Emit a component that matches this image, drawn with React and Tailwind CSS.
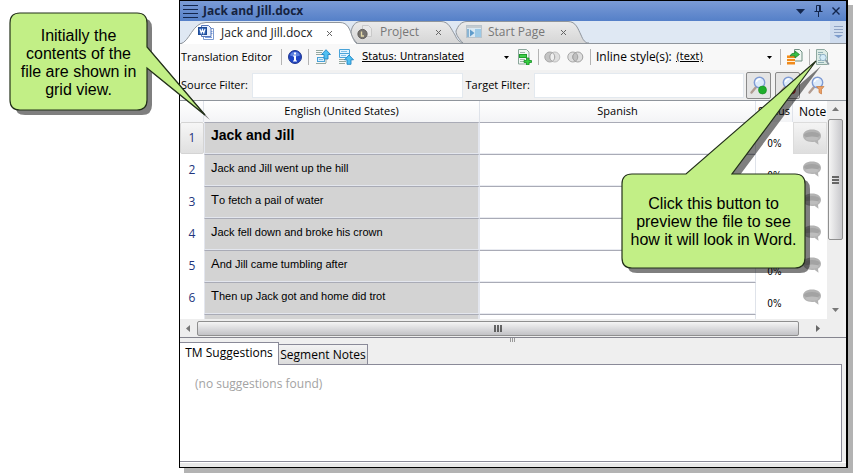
import React from "react";

const segments = [
  { id: 1, source: "Jack and Jill", status: "0%", heading: true },
  { id: 2, source: "Jack and Jill went up the hill", status: "0%" },
  { id: 3, source: "To fetch a pail of water" },
  { id: 4, source: "Jack fell down and broke his crown" },
  { id: 5, source: "And Jill came tumbling after", status: "0%" },
  { id: 6, source: "Then up Jack got and home did trot", status: "0%" },
];

const uiFont = "font-['Open_Sans','Noto_Sans',sans-serif]";
const smallFont = "font-['DejaVu_Sans_Condensed','DejaVu_Sans',sans-serif]";

function WordIcon() {
  return (
    <svg width="17" height="16" viewBox="0 0 17 16">
      <path d="M5.500 3.500h10v11h-10z" fill="#fff" stroke="#7d9bcf" />
      <path d="M12 6.500h2.500M12 8.500h2.500M7 12.500h7" stroke="#7b9fe0" />
      <path d="M3.500.500h7l2.500 2.500v8.500h-9.500z" fill="#eaf2ff" stroke="#5878b8" />
      <rect x=".5" y="2.500" width="8" height="7" fill="#2f62b5" stroke="#1f4a94" />
      <path d="M2 4l1.200 4 1.300-3.500 1.300 3.500 1.200-4" fill="none" stroke="#fff" strokeWidth="1.100" />
    </svg>
  );
}

function ProjectIcon() {
  return (
    <svg width="17" height="16" viewBox="0 0 17 16">
      <path d="M5.500 1.500h6l3 3v8h-9z" fill="#e9e9e9" stroke="#c9c9c9" />
      <circle cx="5.500" cy="10" r="4.600" fill="#777470" stroke="#5f5c58" />
      <path d="M4.500 7.500v4.500h2.500" fill="none" stroke="#e3d9a8" strokeWidth="1.400" />
    </svg>
  );
}

function StartIcon() {
  return (
    <svg width="16" height="14" viewBox="0 0 16 14">
      <rect x=".5" y=".5" width="15" height="12" fill="#d9e8f2" stroke="#b9c4cc" />
      <rect x="1" y="1" width="14" height="2" fill="#c4cbd0" />
      <path d="M2 4v8" stroke="#6fa3c9" strokeWidth="1.500" />
      <path d="M4 4.500l4.500 3.500L4 11.500z" fill="#5f9ccb" />
      <rect x="9" y="4" width="6" height="8" fill="#9cc9e6" />
    </svg>
  );
}

function Caret() {
  return (
    <svg width="5" height="3" viewBox="0 0 5 3">
      <path d="M0 0h5L2.500 3z" fill="#000" />
    </svg>
  );
}

function InfoIcon() {
  return (
    <svg width="14" height="14" viewBox="0 0 14 14">
      <circle cx="7" cy="7" r="6.500" fill="#1f45c4" stroke="#24398f" />
      <path d="M2 5.500a5.200 5.200 0 0 1 10 0q-5 2-10 0z" fill="#5f83e0" />
      <path d="M6 2.500h2v2h-2zM5 5.500h3v5h1v1h-4v-1h1v-4h-1z" fill="#fff" />
    </svg>
  );
}

function PageUpIcon() {
  return (
    <svg width="16" height="16" viewBox="0 0 16 16">
      <path d="M1 1.500h7M1 3.500h6M1 5.500h8M1 14.500h10" stroke="#94a8a0" />
      <rect x="2.500" y="8.500" width="7" height="4" fill="#d9f0fd" stroke="#49a3d8" />
      <path d="M4 10.500h4" stroke="#7fc0e8" />
      <path d="M11 .7l4.500 4.800h-2.500v4.500h-4v-4.500h-2.500z" fill="#4fc0f2" stroke="#2387c4" strokeWidth=".9" />
      <path d="M11 10v4" stroke="#94a8a0" />
    </svg>
  );
}

function RowsUpIcon() {
  return (
    <svg width="16" height="16" viewBox="0 0 16 16">
      <path d="M1.500.500h10v4h-10zM1.500 4.500h10v4h-10z" fill="#e2f4ff" stroke="#49a3d8" />
      <path d="M3 2.500h6M3 6.500h5" stroke="#7fc0e8" />
      <path d="M1 10.500h6M1 12.500h7M1 14.500h6" stroke="#94a8a0" />
      <path d="M11 6l4.500 4.800h-2.500v4.500h-4v-4.500h-2.500z" fill="#4fc0f2" stroke="#2387c4" strokeWidth=".9" />
    </svg>
  );
}

function AddSegmentIcon() {
  return (
    <svg width="15" height="16" viewBox="0 0 15 16">
      <path d="M1.500.5h8l2.500 2.500v12h-10.500z" fill="#f1f8f4" stroke="#8ba69b" />
      <path d="M3 3.500h5M3 10.500h5M3 12.500h4" stroke="#9fb5ab" />
      <rect x="2.500" y="5.500" width="7" height="3" fill="#3fd04a" stroke="#1d9d2b" />
      <path d="M9.500 9h2.500v2.500h2.500v2h-2.500v2.500h-2.500v-2.500h-2.500v-2h2.500z" fill="#33cf3f" stroke="#168d24" strokeWidth=".8" />
    </svg>
  );
}

function RingsIcon({ joined }) {
  return (
    <svg width="17" height="12" viewBox="0 0 17 12">
      <circle cx="5.800" cy="6" r="5" fill={joined ? "#dedede" : "#c4c4c4"} stroke="#a6a6a6" />
      <circle cx="10.800" cy="6" r="5" fill="#dedede" stroke={joined ? "#a0a0a0" : "#bdbdbd"} />
      <path d="M8.300 1.700a5 5 0 0 1 0 8.600a5 5 0 0 1 0-8.600z" fill={joined ? "#c0c0c0" : "#efefef"} stroke="#a0a0a0" />
    </svg>
  );
}

function ExportIcon() {
  return (
    <svg width="17" height="16" viewBox="0 0 17 16">
      <path d="M8.500.5h5l2.500 2.500v9h-7.500z" fill="#f0f7f3" stroke="#6f8f82" />
      <path d="M1 6.500h8v9h-8z" fill="#f08a1c" />
      <path d="M1 9.500h8M1 12.500h8" stroke="#fff0d8" />
      <path d="M1 6.500h8" stroke="#ffc070" />
      <path d="M4 7q1-3 5-3v-2l4.500 3.500-4.500 3.500v-2q-3-.5-5 0z" fill="#35bd45" stroke="#187c25" strokeWidth=".7" />
    </svg>
  );
}

function PreviewIcon() {
  return (
    <svg width="15" height="17" viewBox="0 0 15 17">
      <path d="M1.500.5h8l3 3v12h-11z" fill="#dcebe5" stroke="#8fa9a0" />
      <path d="M3 3.500h5M3 5.500h3M3 11.500h3M3 13.500h6" stroke="#8fb0b5" />
      <circle cx="8" cy="8.500" r="3.200" fill="#d3ecf8" stroke="#8fb0c4" />
      <path d="M10.500 11l3.500 4.500" stroke="#8a97a0" strokeWidth="1.600" />
    </svg>
  );
}

function Magnifier({ badge }) {
  return (
    <svg width="19" height="19" viewBox="0 0 19 19">
      <path d="M7.500 10.500L2.500 16.500" stroke="#b09c92" strokeWidth="2.400" strokeLinecap="round" />
      <circle cx="10.500" cy="6.500" r="5.200" fill="#dceafa" stroke="#7f9bd4" strokeWidth="1.400" />
      <path d="M7.500 6a3.200 3.200 0 0 1 4-3" fill="none" stroke="#fff" strokeWidth="1.500" />
      {badge === "green" && <circle cx="13.500" cy="14" r="4" fill="#1fae2c" stroke="#148a20" strokeWidth=".6" />}
      {badge === "red" && <circle cx="13.500" cy="14" r="4" fill="#c22" stroke="#911" strokeWidth=".6" />}
      {badge === "funnel" && (
        <path d="M9.500 10.500h7.500l-2.500 3v4.500l-2.500-1.500v-3z" fill="#eba066" stroke="#c97a3c" strokeWidth=".7" />
      )}
    </svg>
  );
}

function NoteBubble() {
  return (
    <svg width="20" height="18" viewBox="0 0 20 18" className="mx-auto">
      <path d="M10 .5c5.500 0 9 2.700 9 6.300 0 2.200-1 3.700-3 4.900l.5 4-4-2.900c-6.500.9-11.500-1.800-11.500-6C1 3.200 4.500.5 10 .5z" fill="#b3b3b3" />
      <ellipse cx="10" cy="6" rx="8" ry="3" fill="#a3a3a3" />
      <ellipse cx="10" cy="9.500" rx="6.500" ry="2" fill="#bdbdbd" />
    </svg>
  );
}

function Tab({ icon, label, width, outline, className, bodyClass, active }) {
  return (
    <div role="tab" aria-selected={active} className={`relative flex h-[22px] shrink-0 items-center ${className}`}>
      <svg className="absolute inset-0" width={width} height="22" viewBox={`0 0 ${width} 22`}>
        <defs>
          <linearGradient id="tabShade" x1="0" y1="0" x2="0" y2="1">
            <stop offset="0" stopColor="#ebebeb" />
            <stop offset="1" stopColor="#d6d6d6" />
          </linearGradient>
        </defs>
        <path d={outline} fill={active ? "#fff" : "url(#tabShade)"} stroke="#8f959c" />
      </svg>
      <span className={`relative flex w-full items-center ${bodyClass}`}>
        {icon}
        <button type="button" className="ml-[6px] whitespace-nowrap">{label}</button>
        <button type="button" aria-label={`Close ${label}`} className="ml-auto">
          <svg width="7" height="7" viewBox="0 0 7 7">
            <path d="M1 1l5 5M6 1L1 6" stroke="#666" />
          </svg>
        </button>
      </span>
    </div>
  );
}

function Separator() {
  return <span className="h-4 w-px shrink-0 bg-[#b4b4b4]" />;
}

function TitleBar() {
  return (
    <header className="flex h-5 items-center bg-linear-to-b from-[#7b9bd6] to-[#5580c8] pr-[6px] pl-[3px] text-[#15233f]">
      <svg width="15" height="13" viewBox="0 0 15 13">
        <path d="M0 .5h15M0 4.500h15M0 8.500h15M0 12.500h15" stroke="#13264d" />
      </svg>
      <h1 className="ml-[5px] text-[12px] leading-4 font-bold">Jack and Jill.docx</h1>
      <div className="ml-auto flex items-center gap-[9px]">
        <button type="button" aria-label="Window menu">
          <svg width="9" height="5" viewBox="0 0 9 5"><path d="M0 0h9L4.500 5z" fill="#13264d" /></svg>
        </button>
        <button type="button" aria-label="Pin">
          <svg width="9" height="12" viewBox="0 0 9 12">
            <path d="M2.500 6.500v-6h4v6M5.500 1v6M.5 6.500h8M4.500 7v5" fill="none" stroke="#13264d" />
          </svg>
        </button>
        <button type="button" aria-label="Close window">
          <svg width="8" height="8" viewBox="0 0 8 8"><path d="M.5.5l7 7M7.500.5l-7 7" stroke="#13264d" strokeWidth="1.400" /></svg>
        </button>
      </div>
    </header>
  );
}

function TabStrip() {
  return (
    <div role="tablist" className="flex h-[23px] items-end border-b border-[#8f959c] bg-[#dfe8f3] text-[12px] text-[#777]">
      <Tab
        active
        icon={<WordIcon />}
        label="Jack and Jill.docx"
        width={178}
        outline="M0 22C10 20 12 .5 26 .5H160C168 .5 170 8 172 14C174 19 176 22 178 22"
        className="z-10 -mb-px w-[178px] text-[#222]"
        bodyClass="pr-[25px] pl-[18px]"
      />
      <Tab
        icon={<ProjectIcon />}
        label="Project"
        width={116}
        outline="M8 22C4 18 2 14 2 11C3 5 6 .5 12 .5H92C100 .5 102 8 106 14C108 19 111 22 116 22"
        className="-ml-[9px] w-[116px]"
        bodyClass="pr-[23px] pl-[8px]"
      />
      <Tab
        icon={<StartIcon />}
        label="Start Page"
        width={134}
        outline="M8 22C4 18 1 14 1 10C3 5 6 .5 12 .5H113C121 .5 123 8 126 14C128 19 130 22 134 22"
        className="-ml-[10px] w-[134px]"
        bodyClass="pr-[22px] pl-[11px]"
      />
      <button type="button" aria-label="More tabs" className="ml-auto flex h-[22px] w-4 items-center justify-center bg-[#cfdcee]">
        <svg width="9" height="12" viewBox="0 0 9 12">
          <path d="M0 .5h9M0 3.500h9M0 6.500h9" stroke="#8fa3c4" />
          <path d="M0 9h9L4.500 12z" fill="#7c9bcc" />
        </svg>
      </button>
    </div>
  );
}

function Toolbar() {
  return (
    <div className="flex h-[26px] items-center bg-[#f8f8f8] pl-[1px] text-[12px]">
      <span className="w-[98px] shrink-0 text-[11px] whitespace-nowrap">Translation Editor</span>
      <div className="flex items-center">
        <span className="flex items-center gap-[6px]">
          <span className="ml-[2px] flex"><Separator /></span>
          <button type="button" aria-label="Information"><InfoIcon /></button>
          <Separator />
        </span>
        <button type="button" aria-label="Move to previous" className="ml-[6px]"><PageUpIcon /></button>
        <button type="button" aria-label="Move up" className="ml-[7px]"><RowsUpIcon /></button>
      </div>
      <div className="relative ml-2 flex w-[147px] shrink-0 items-center">
        <select aria-label="Status" className={`w-full appearance-none bg-transparent text-[11px] underline ${smallFont}`}>
          <option>Status: Untranslated</option>
        </select>
        <span className="pointer-events-none absolute right-0"><Caret /></span>
      </div>
      <button type="button" aria-label="Add segment" className="mr-[6px] ml-[8px]"><AddSegmentIcon /></button>
      <Separator />
      <button type="button" aria-label="Split" className="ml-[5px]"><RingsIcon /></button>
      <button type="button" aria-label="Merge" className="mr-[6px] ml-[6px]"><RingsIcon joined /></button>
      <Separator />
      <label htmlFor="inlineStyle" className="ml-[5px] w-[80px] shrink-0 text-[12px] whitespace-nowrap">Inline style(s):</label>
      <div className="relative flex min-w-0 flex-1 items-center">
        <select id="inlineStyle" className={`w-full appearance-none bg-transparent text-[11px] underline ${smallFont}`}>
          <option>(text)</option>
        </select>
        <span className="pointer-events-none absolute right-0"><Caret /></span>
      </div>
      <span className="ml-[8px] flex"><Separator /></span>
      <button type="button" aria-label="Export" className="mr-[6px] ml-[5px]"><ExportIcon /></button>
      <Separator />
      <button type="button" aria-label="Preview" className="mr-[16px] ml-[5px]"><PreviewIcon /></button>
    </div>
  );
}

function FilterRow() {
  return (
    <div className="flex h-[30px] items-center pr-[20px] pl-[1px] text-[11px]">
      <label htmlFor="sourceFilter" className="w-[71px] shrink-0 whitespace-nowrap">Source Filter:</label>
      <input id="sourceFilter" className="h-[25px] min-w-0 flex-1 border border-[#e3e9ef] bg-white px-1" />
      <label htmlFor="targetFilter" className="ml-[3px] w-[68px] shrink-0 whitespace-nowrap">Target Filter:</label>
      <input id="targetFilter" className="h-[25px] min-w-0 flex-1 border border-[#e3e9ef] bg-white px-1" />
      <button type="button" aria-label="Apply filter" className="ml-[2px] flex h-[27px] w-[25px] items-center justify-center rounded-[2px] border border-[#8a8a8a] bg-[#e4e4e4]">
        <Magnifier badge="green" />
      </button>
      <button type="button" aria-label="Clear filter" className="ml-1 flex h-[27px] w-[25px] items-center justify-center rounded-[2px] border border-[#8a8a8a] bg-[#e4e4e4]">
        <Magnifier badge="red" />
      </button>
      <button type="button" aria-label="Advanced filter" className="ml-[7px]"><Magnifier badge="funnel" /></button>
    </div>
  );
}

function Grid() {
  const head = "h-[21px] border-r border-[#dfe3ea] p-0 text-center text-[11px] font-normal";
  return (
    <div className="h-[218px] min-w-0 flex-1 overflow-hidden bg-white">
      <table className="w-full table-fixed border-separate border-spacing-0 text-[12px]">
        <colgroup>
          <col className="w-[24px]" />
          <col />
          <col />
          <col className="w-[37px]" />
          <col className="w-[34px]" />
        </colgroup>
        <thead>
          <tr className="bg-linear-to-b from-white to-[#f3f4f6]">
            <th scope="col" className={head} aria-label="Number" />
            <th scope="col" className={head}>English (United States)</th>
            <th scope="col" className={head}>Spanish</th>
            <th scope="col" className={head}>Status</th>
            <th scope="col" className="h-[21px] overflow-visible p-0 pl-[6px] text-left font-normal">Note</th>
          </tr>
        </thead>
        <tbody>
          {segments.map((s) => (
            <tr key={s.id} className="h-8">
              <th
                scope="row"
                className={`p-0 text-center font-normal text-[#22357d] ${s.heading ? "rounded-[2px] border border-[#d4d4d4] bg-linear-to-b from-[#f6f6f6] to-[#e0e0e0]" : ""}`}
              >
                {s.id}
              </th>
              <td className="border-t border-r-2 border-b border-l border-t-[#a9abb6] border-r-[#e3e6ee] border-b-[#e3e6ee] border-l-[#e3e6ee] bg-[#d3d3d3] p-0 pl-[6px] align-top font-['Liberation_Sans',Arial,sans-serif]">
                <p
                  className={
                    s.heading
                      ? "mt-[3px] text-[14px] leading-[18px] font-bold"
                      : "mt-[5px] text-[11px] leading-[16px] first-letter:text-[13px]"
                  }
                >
                  {s.source}
                </p>
              </td>
              <td className="border-t border-r border-b border-t-[#a9abb6] border-r-[#dfe3ea] border-b-[#e9ebf1] p-0" />
              <td className={`p-0 pt-[10px] text-center text-[10px] ${smallFont}`}>{s.status}</td>
              <td className={`p-0 ${s.heading ? "border border-[#dcdcdc] bg-linear-to-b from-[#f4f4f4] to-[#dedede]" : ""}`}>
                <button type="button" aria-label={`Note for segment ${s.id}`} className="flex w-full pl-[4px]">
                  <NoteBubble />
                </button>
              </td>
            </tr>
          ))}
          <tr className="h-8">
            <td />
            <td className="border-t border-r-2 border-l border-t-[#a9abb6] border-r-[#e3e6ee] border-l-[#e3e6ee] bg-[#d3d3d3]" />
            <td className="border-t border-r border-t-[#a9abb6] border-r-[#dfe3ea]" />
            <td />
            <td />
          </tr>
        </tbody>
      </table>
    </div>
  );
}

function VerticalScroll() {
  return (
    <div className="mr-[3px] flex w-[16px] shrink-0 flex-col items-center bg-[#eee] pt-[6px]">
      <svg width="7" height="4" viewBox="0 0 7 4"><path d="M0 4h7L3.500 0z" fill="#777" /></svg>
      <div className="mt-2 flex h-[121px] w-[15px] items-center justify-center rounded-[2px] border border-[#8f8f8f] bg-linear-to-r from-[#f5f5f5] to-[#c8c8cc]">
        <svg width="7" height="8" viewBox="0 0 7 8"><path d="M0 1h7M0 4h7M0 7h7" stroke="#666" strokeWidth="2" /></svg>
      </div>
      <svg className="mt-auto mb-[7px]" width="7" height="4" viewBox="0 0 7 4"><path d="M0 0h7L3.500 4z" fill="#777" /></svg>
    </div>
  );
}

function HorizontalScroll() {
  return (
    <div className="mr-[3px] flex h-[18px] items-center bg-[#eee] pl-[6px]">
      <svg width="4" height="7" viewBox="0 0 4 7"><path d="M4 0v7L0 3.500z" fill="#777" /></svg>
      <div className="ml-[7px] flex h-[15px] flex-1 items-center justify-center rounded-[2px] border border-[#8f8f8f] bg-linear-to-b from-[#f5f5f5] to-[#c2c2c6]">
        <svg width="9" height="7" viewBox="0 0 9 7"><path d="M1 0v7M4 0v7M7 0v7" stroke="#444" strokeWidth="2" strokeOpacity=".8" /></svg>
      </div>
      <svg className="mr-[23px] ml-[17px]" width="4" height="7" viewBox="0 0 4 7"><path d="M0 0v7l4-3.500z" fill="#666" /></svg>
    </div>
  );
}

function SuggestionsPanel() {
  return (
    <section className="flex flex-1 flex-col bg-[#efefef] text-[12px]">
      <div className="flex h-[5px] items-start justify-center border-t border-[#85858f]">
        <svg width="6" height="4" viewBox="0 0 6 4"><path d="M.5 0v4M2.500 0v4M4.500 0v4" stroke="#999" /></svg>
      </div>
      <div role="tablist" className="relative z-10 flex items-end">
        <button type="button" role="tab" aria-selected="true" className="-mb-px h-[23px] w-[99px] border-t border-r border-[#8a8a98] bg-white pb-[3px] whitespace-nowrap">
          TM Suggestions
        </button>
        <button type="button" role="tab" aria-selected="false" className="-mb-px h-[21px] w-[89px] border-t border-r border-b border-[#8a8a98] bg-linear-to-b from-[#f3f3f3] to-[#dcdcdc] whitespace-nowrap">
          Segment Notes
        </button>
      </div>
      <div className="mr-[4px] h-[98px] border-t border-r border-b border-[#8a8a98] bg-white pt-[10px] pl-[15px] text-[#a3a3a3]">
        (no suggestions found)
      </div>
      <div className="h-[5px] border-t border-white bg-[#e8e8e8]" />
    </section>
  );
}

function Callout({ className, width, height, outline, textClass, children }) {
  return (
    <div className={`pointer-events-none absolute ${className}`}>
      <svg className="block overflow-visible" width={width} height={height} viewBox={`0 0 ${width} ${height}`}>
        <path d={outline} transform="translate(5 5)" fill="#000" fillOpacity=".5" />
        <path d={outline} fill="#c2ef86" stroke="#23301a" strokeWidth="1.200" />
      </svg>
      <p className={`absolute text-center font-['Liberation_Sans',Arial,sans-serif] text-[16px] leading-[18px] whitespace-nowrap ${textClass}`}>
        {children}
      </p>
    </div>
  );
}

export default function App() {
  return (
    <div className="relative bg-white pr-[5px] pb-[5px] pl-[179px]">
      <main className={`flex flex-col border border-r-2 border-black bg-[#f1f1f1] text-black shadow-[5px_5px_0_#b3b3b3] ${uiFont}`}>
        <TitleBar />
        <TabStrip />
        <Toolbar />
        <FilterRow />
        <div className="flex border-t border-[#8f959c]">
          <Grid />
          <VerticalScroll />
        </div>
        <HorizontalScroll />
        <SuggestionsPanel />
      </main>

      <Callout
        className="top-[13px] left-[10px]"
        width={196}
        height={104}
        outline="M10 0H127Q137 0 137 10V34L195 102L137 55V87Q137 97 127 97H10Q0 97 0 87V10Q0 0 10 0Z"
        textClass="top-[14px] left-0 w-[137px]"
      >
        Initially the<br />contents of the<br />file are shown in<br />grid view.
      </Callout>

      <Callout
        className="top-[61px] right-[36px]"
        width={195}
        height={207}
        outline="M10 113H64L194 0L110 113H173Q183 113 183 123V197Q183 207 173 207H10Q0 207 0 197V123Q0 113 10 113Z"
        textClass="top-[134px] left-0 w-[183px]"
      >
        Click this button to<br />preview the file to see<br />how it will look in Word.
      </Callout>
    </div>
  );
}
